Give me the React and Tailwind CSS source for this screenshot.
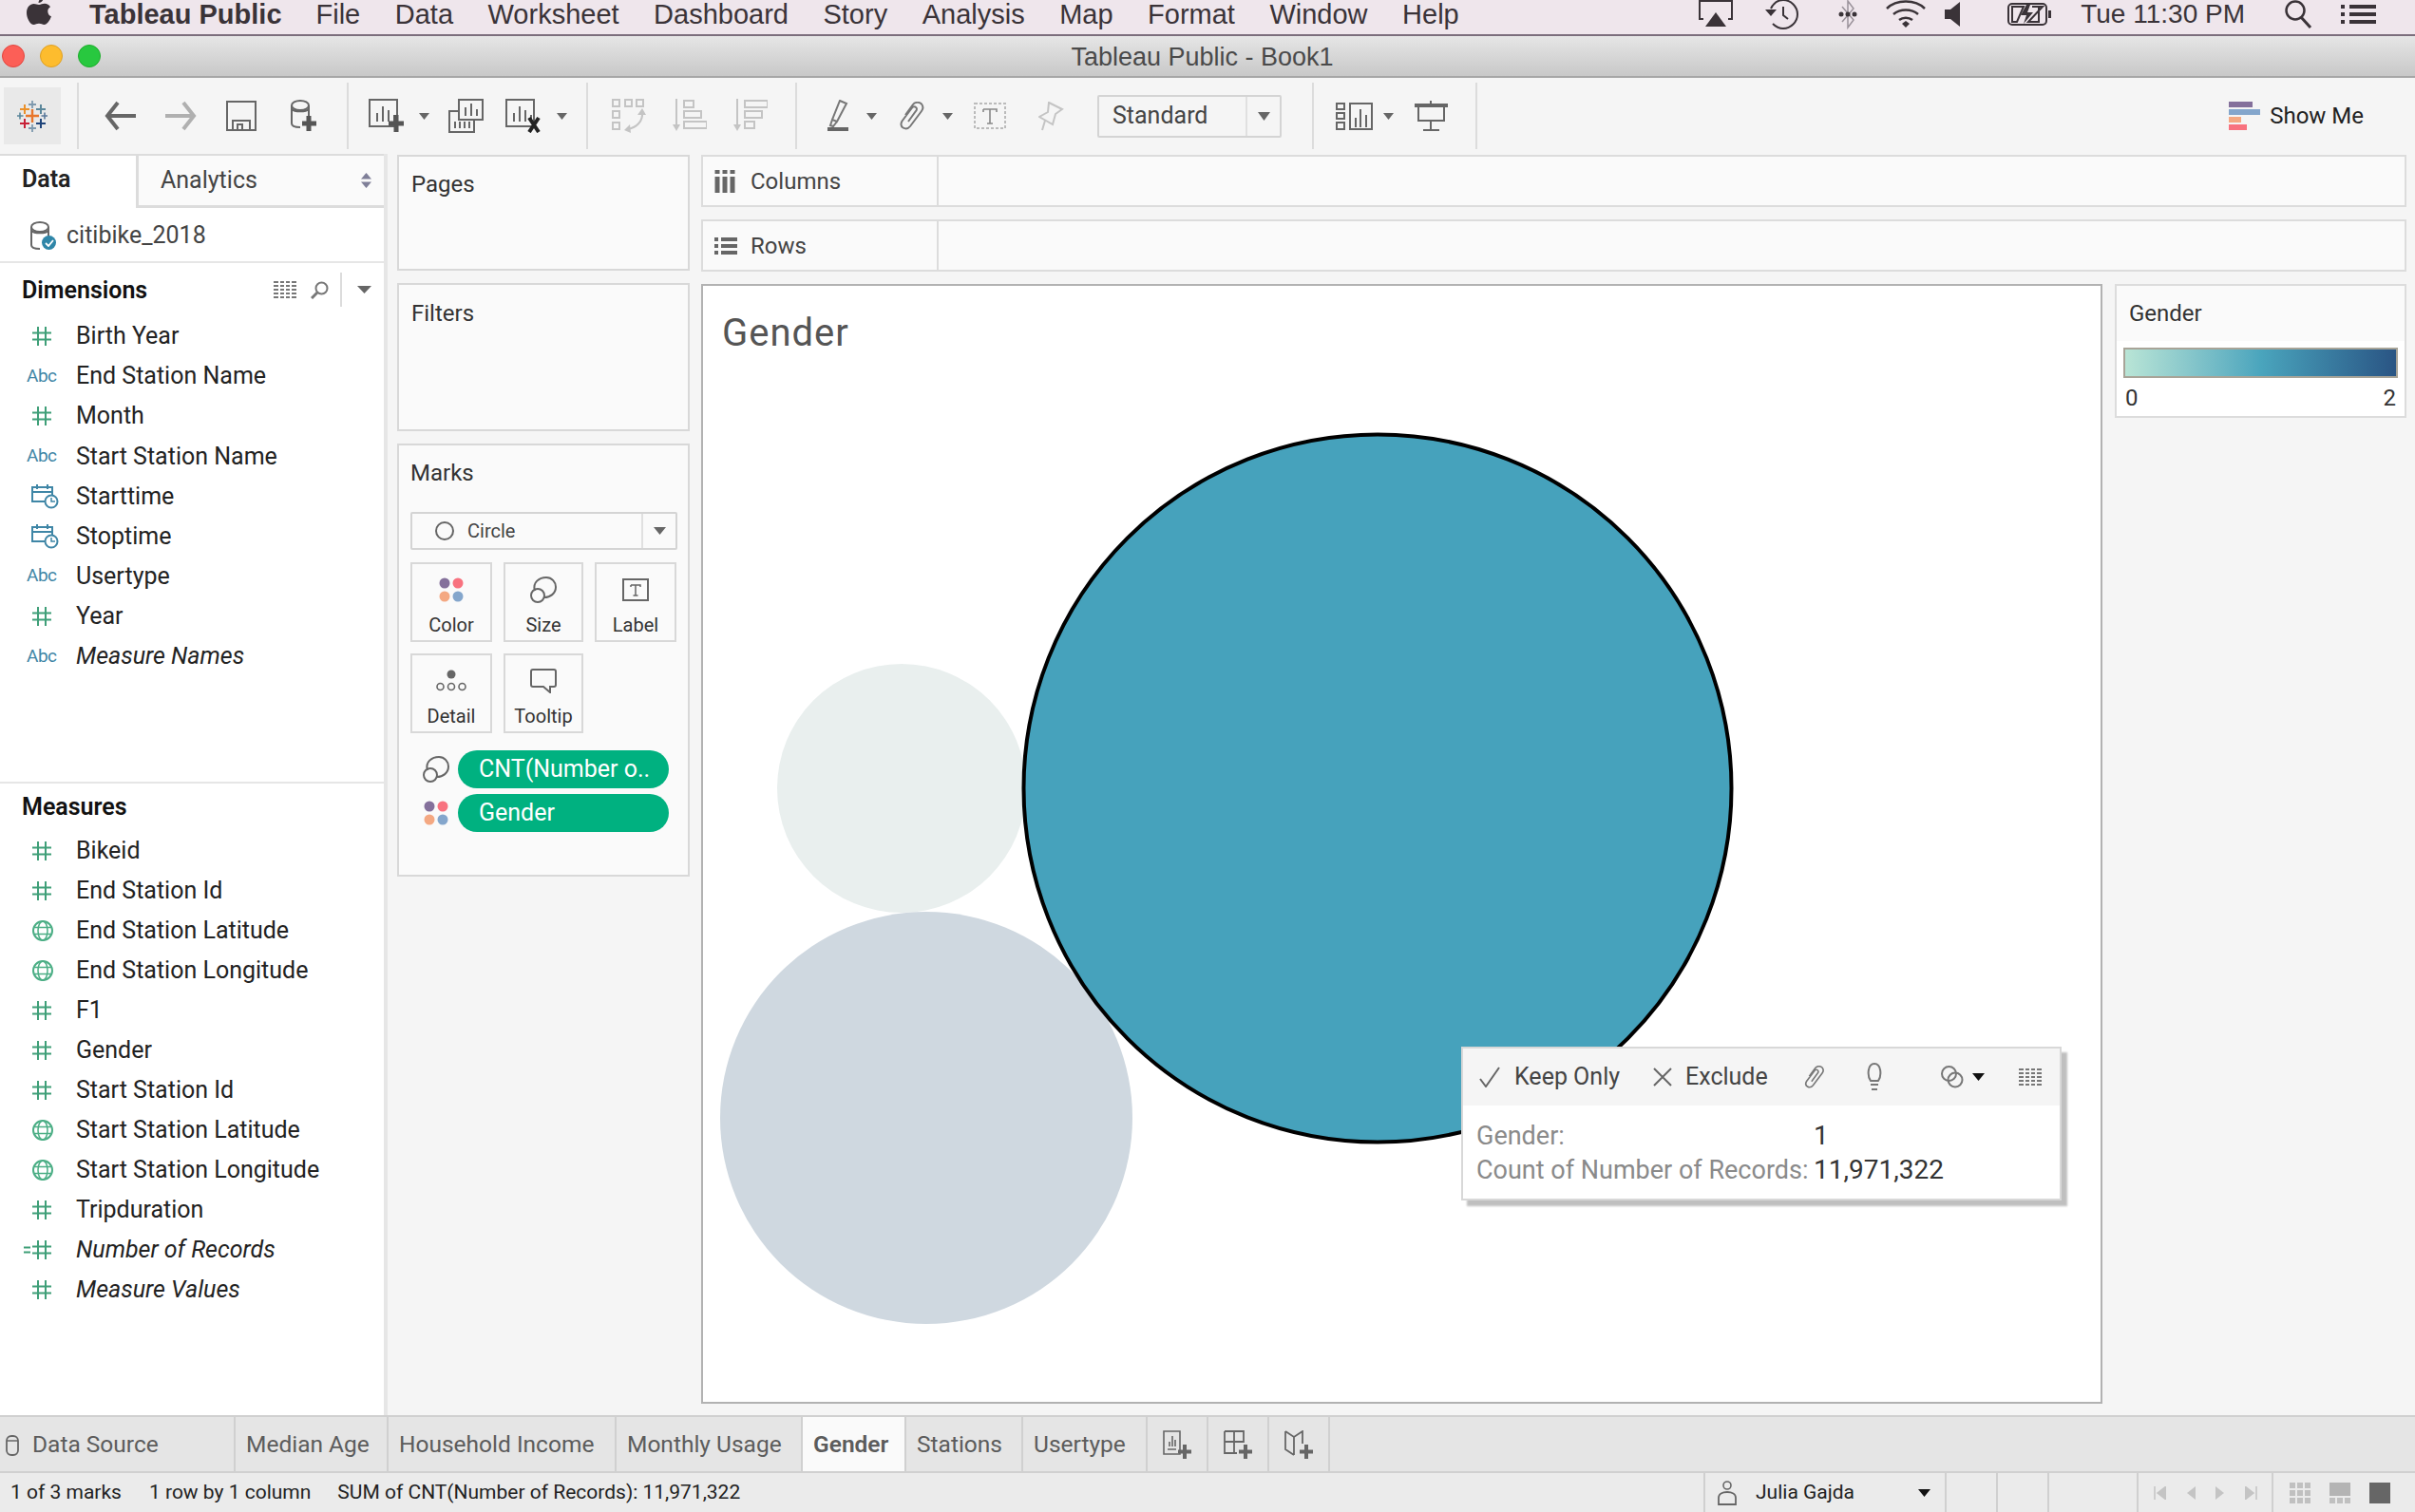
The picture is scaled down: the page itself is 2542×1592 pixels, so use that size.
import React from "react";

const dimensions = [
  { icon: "hash", name: "Birth Year" },
  { icon: "abc", name: "End Station Name" },
  { icon: "hash", name: "Month" },
  { icon: "abc", name: "Start Station Name" },
  { icon: "date", name: "Starttime" },
  { icon: "date", name: "Stoptime" },
  { icon: "abc", name: "Usertype" },
  { icon: "hash", name: "Year" },
  { icon: "abc", name: "Measure Names", italic: true },
];

const measures = [
  { icon: "hash", name: "Bikeid" },
  { icon: "hash", name: "End Station Id" },
  { icon: "globe", name: "End Station Latitude" },
  { icon: "globe", name: "End Station Longitude" },
  { icon: "hash", name: "F1" },
  { icon: "hash", name: "Gender" },
  { icon: "hash", name: "Start Station Id" },
  { icon: "globe", name: "Start Station Latitude" },
  { icon: "globe", name: "Start Station Longitude" },
  { icon: "hash", name: "Tripduration" },
  { icon: "calc", name: "Number of Records", italic: true },
  { icon: "hash", name: "Measure Values", italic: true },
];

function Svg({ w, h, className = "", children }) {
  return (
    <svg width={w} height={h} viewBox={`0 0 ${w} ${h}`} fill="none" className={`shrink-0 ${className}`}>
      {children}
    </svg>
  );
}

function Caret({ w = 11, h = 7, color = "#666", className = "" }) {
  return (
    <Svg w={w} h={h} className={className}>
      <path d={`M0 0H${w}L${w / 2} ${h}Z`} fill={color} />
    </Svg>
  );
}

function Sep({ className = "" }) {
  return <div className={`h-[70px] w-[2px] shrink-0 bg-[#dcdcdc] ${className}`} />;
}

// small table glyph used in the data pane header and the tooltip
function TableIcon({ className = "" }) {
  return (
    <Svg w={24} h={18} className={className}>
      <path d="M0 1H5M7 1H11M13 1H17M19 1H24M0 5H5M7 5H11M13 5H17M19 5H24M0 9H5M7 9H11M13 9H17M19 9H24M0 13H5M7 13H11M13 13H17M19 13H24M0 17H5M7 17H11M13 17H17M19 17H24" stroke="#777" strokeWidth="2" />
    </Svg>
  );
}

function TableauLogo() {
  const crosses = [
    [16, 16, 7, "#e8762b", 2.4],
    [16, 4, 4, "#7e99ae", 1.8],
    [8, 9, 5, "#eb912b", 2],
    [25, 9, 5, "#5b879b", 2],
    [8, 24, 5, "#c72037", 2],
    [25, 24, 5, "#1f447a", 2],
    [16, 29, 4, "#7e99ae", 1.8],
    [3, 16, 3.5, "#5b879b", 1.6],
    [29, 16, 3.5, "#59789a", 1.6],
  ];
  return (
    <Svg w={32} h={33}>
      {crosses.map(([x, y, s, c, t], i) => (
        <path key={i} d={`M${x - s} ${y}H${x + s}M${x} ${y - s}V${y + s}`} stroke={c} strokeWidth={t} />
      ))}
    </Svg>
  );
}

function Chart({ w = 37, h = 36, stroke = "#666" }) {
  return (
    <>
      <path d={`M1 1H${w - 7}V${h - 7}H1Z`} stroke={stroke} strokeWidth="2" />
      <path d="M9 24V15M15 24V8M21 24V12M27 24V17" stroke={stroke} strokeWidth="2" />
    </>
  );
}

function NewSheetIcon() {
  return (
    <Svg w={37} h={36}>
      <Chart />
      <path d="M29 17V35M21 26H37" stroke="#555" strokeWidth="5" />
    </Svg>
  );
}

function DuplicateIcon() {
  return (
    <Svg w={37} h={36}>
      <path d="M11 1H36V22H11Z" fill="#f5f5f5" stroke="#666" strokeWidth="2" />
      <path d="M18 18V9M24 18V5M30 18V11" stroke="#666" strokeWidth="2" />
      <path d="M11 13H1V35H27V22" stroke="#666" strokeWidth="2" />
      <path d="M7 31V24M12 31V24M17 31V24M22 31V24" stroke="#666" strokeWidth="2" />
    </Svg>
  );
}

function ClearIcon() {
  return (
    <Svg w={37} h={36}>
      <Chart />
      <path d="M25 20L35 35M35 20L25 35" stroke="#222" strokeWidth="4" />
    </Svg>
  );
}

function SwapIcon() {
  const s = "#c4c4c4";
  return (
    <Svg w={36} h={36}>
      <g stroke={s} strokeWidth="2">
        <rect x="1" y="1" width="7" height="7" />
        <rect x="14" y="1" width="7" height="7" />
        <rect x="26" y="1" width="7" height="7" />
        <rect x="1" y="13" width="7" height="7" />
        <rect x="1" y="25" width="7" height="7" />
        <path d="M32 14C33 24 26 30 17 32" />
      </g>
      <path d="M27 17L32 10L36 17ZM19 27L13 33L20 36Z" fill={s} />
    </Svg>
  );
}

function SortIcon({ reverse }) {
  const s = "#c4c4c4";
  const bars = reverse
    ? [[12, 2, 24], [12, 13, 18], [12, 24, 10]]
    : [[12, 2, 10], [12, 13, 18], [12, 24, 24]];
  return (
    <Svg w={36} h={36}>
      <path d="M4 0V28" stroke={s} strokeWidth="2" />
      <path d="M0 27H8L4 34Z" fill={s} />
      {bars.map(([x, y, w]) => (
        <rect key={y} x={x} y={y} width={w} height="7" stroke={s} strokeWidth="2" />
      ))}
    </Svg>
  );
}

function ClipIcon({ w = 26, h = 30, color = "#777" }) {
  return (
    <svg width={w} height={h} viewBox="0 0 26 30" fill="none" className="shrink-0">
      <path
        d="M6 14L14 3C16 0.5 20 0 23 2.5C25 5 24.5 8 23 10L11 26C9 28.5 6 29 3.5 27.5C1 26 1 23 2.5 20.5L13 6.5C14 5 16 5 17 6C18.5 7 18 9 17 10L9 21"
        stroke={color}
        strokeWidth="2"
      />
    </svg>
  );
}

function HighlighterIcon() {
  return (
    <Svg w={22} h={34}>
      <path d="M13 1L20 4L10 23L5 21ZM5 21L3 27L6 28L10 23" stroke="#777" strokeWidth="2" />
      <rect x="0" y="29" width="22" height="4" fill="#666" />
    </Svg>
  );
}

function TextBoxIcon() {
  return (
    <Svg w={34} h={28}>
      <rect x="1" y="1" width="32" height="26" stroke="#bbb" strokeWidth="2" strokeDasharray="3 2" />
      <path d="M10 7H24V10M10 7V10M17 7V22M14 22H20" stroke="#888" strokeWidth="1.6" />
    </Svg>
  );
}

function PinIcon() {
  return (
    <Svg w={27} h={31}>
      <path d="M11 1L25 8L18 13L15 24L1 16L10 11ZM7 20L4 30" stroke="#c4c4c4" strokeWidth="2" />
    </Svg>
  );
}

function ShowMeToolIcon() {
  return (
    <Svg w={40} h={29}>
      <g stroke="#666" strokeWidth="2">
        <rect x="1" y="1" width="8" height="6" />
        <rect x="1" y="11" width="8" height="6" />
        <rect x="1" y="21" width="8" height="7" />
        <rect x="15" y="1" width="23" height="27" />
        <path d="M21 26V16M26 26V7M32 26V13" />
      </g>
    </Svg>
  );
}

function PresentIcon() {
  return (
    <Svg w={35} h={32}>
      <rect x="0" y="3" width="35" height="4" fill="#666" />
      <path d="M17 0V3M4 7V21H31V7M17 21V31M9 31H26" stroke="#666" strokeWidth="2" />
    </Svg>
  );
}

function SaveIcon() {
  return (
    <Svg w={32} h={32}>
      <path d="M1 1H31V31H1Z" stroke="#666" strokeWidth="2" />
      <path d="M7 31V21H25V31M12 31V25H17V31" stroke="#666" strokeWidth="2" />
    </Svg>
  );
}

function DbIcon({ w = 28, h = 34, plus }) {
  return (
    <Svg w={w} h={h}>
      <ellipse cx="11" cy="6" rx="9" ry="5" stroke="#666" strokeWidth="2" />
      <path d="M2 6V25C2 28 5 29 11 29M20 6V19M2 10C5 13 17 13 20 10" stroke="#666" strokeWidth="2" />
      {plus && <path d="M20 17V33M13 25H28" stroke="#555" strokeWidth="5" />}
    </Svg>
  );
}

function Toolbar() {
  return (
    <div className="flex h-[80px] shrink-0 items-center bg-[#f5f5f5] pr-[54px]">
      <div className="ml-[4px] flex h-[60px] w-[60px] shrink-0 items-center justify-center bg-[#e9e9e9]">
        <TableauLogo />
      </div>
      <Sep className="ml-[17px]" />
      <Svg w={34} h={32} className="ml-[27px]">
        <path d="M14 2L3 16L14 30M3 16H33" stroke="#666" strokeWidth="4" />
      </Svg>
      <Svg w={34} h={32} className="ml-[29px]">
        <path d="M20 2L31 16L20 30M31 16H1" stroke="#b0b0b0" strokeWidth="4" />
      </Svg>
      <div className="ml-[31px]"><SaveIcon /></div>
      <div className="ml-[35px]"><DbIcon plus /></div>
      <Sep className="ml-[32px]" />
      <div className="ml-[21px]"><NewSheetIcon /></div>
      <Caret className="ml-[16px]" />
      <div className="ml-[20px]"><DuplicateIcon /></div>
      <div className="ml-[23px]"><ClearIcon /></div>
      <Caret className="ml-[17px]" />
      <Sep className="ml-[20px]" />
      <div className="ml-[25px]"><SwapIcon /></div>
      <div className="ml-[28px]"><SortIcon /></div>
      <div className="ml-[28px]"><SortIcon reverse /></div>
      <Sep className="ml-[29px]" />
      <div className="ml-[32px]"><HighlighterIcon /></div>
      <Caret className="ml-[19px]" />
      <div className="ml-[24px]"><ClipIcon /></div>
      <Caret className="ml-[19px]" />
      <div className="ml-[22px]"><TextBoxIcon /></div>
      <div className="ml-[34px]"><PinIcon /></div>
      <div className="ml-[35px] flex h-[45px] w-[194px] shrink-0 items-center rounded-[2px] border-2 border-[#d4d4d4] text-[25px] text-[#444]">
        <span className="flex-1 pl-[14px]">Standard</span>
        <div className="flex h-full w-[36px] items-center justify-center border-l-2 border-[#e0e0e0]">
          <Caret w={13} h={9} />
        </div>
      </div>
      <Sep className="ml-[32px]" />
      <div className="ml-[23px]"><ShowMeToolIcon /></div>
      <Caret className="ml-[10px]" />
      <div className="ml-[22px]"><PresentIcon /></div>
      <Sep className="ml-[29px]" />
      <div className="ml-auto flex items-center gap-[10px]">
        <div className="flex flex-col gap-[2px]">
          <div className="h-[6px] w-[25px] bg-[#84709b]" />
          <div className="h-[6px] w-[33px] bg-[#84a6cc]" />
          <div className="h-[6px] w-[13px] bg-[#f4a882]" />
          <div className="h-[6px] w-[19px] bg-[#f8727f]" />
        </div>
        <span className="text-[24px] text-[#222]">Show Me</span>
      </div>
    </div>
  );
}

function MenuBar() {
  const items = ["File", "Data", "Worksheet", "Dashboard", "Story", "Analysis", "Map", "Format", "Window", "Help"];
  return (
    <div className="flex h-[38px] shrink-0 items-center overflow-hidden border-b-2 border-[#7c6e7c] bg-[#efe6ec] pb-[6px] font-['Liberation_Sans',sans-serif] text-[29px] leading-[28px] text-[#3a3338]">
      <svg width="26" height="42" viewBox="0 0 26 42" className="ml-[28px] shrink-0 translate-y-[3px]">
        <path
          d="M18 1C18 4 15.5 7 12.5 7C12.5 4 15 1.500 18 1ZM13 9C15 9 16.500 7.800 19 7.800C21.500 7.800 23.800 9 25 11.300C21 13.500 21.500 19.500 26 21.300C24.500 25.500 21.500 30 18.500 30C16.500 30 15.500 28.800 13 28.800C10.500 28.800 9.500 30 7.500 30C4 30 0 23.500 0 17.500C0 11.500 3.800 8 7.500 8C9.800 8 11.300 9 13 9Z"
          fill="#3a3338"
          transform="translate(0 -1)"
        />
      </svg>
      <span className="ml-[40px] whitespace-nowrap font-bold">Tableau Public</span>
      <div className="ml-[36px] flex gap-[36.5px]">
        {items.map((item) => (
          <span key={item}>{item}</span>
        ))}
      </div>
      <div className="ml-auto flex items-center pr-[41px]">
        <Svg w={36} h={30}>
          <path d="M5 20H1V1H35V20H31" stroke="#3a3338" strokeWidth="2" />
          <path d="M18 13L29 28H7Z" fill="#3a3338" />
        </Svg>
        <Svg w={37} h={32} className="ml-[33px]">
          <path d="M7 10C10 4 15 1 20 1C28 1 35 8 35 16C35 24 28 31 20 31C15 31 12 29 9 26M20 8V17L25 21" stroke="#3a3338" strokeWidth="2" />
          <path d="M1 11H13L7 18Z" fill="#3a3338" />
        </Svg>
        <Svg w={21} h={32} className="ml-[41px]">
          <path d="M4 8L16 22L10 30V2L16 10L4 24" stroke="#9a929a" strokeWidth="1.500" />
          <circle cx="3" cy="16" r="2.500" fill="#3a3338" />
          <circle cx="10" cy="16" r="2.500" fill="#3a3338" />
          <circle cx="17" cy="16" r="2.500" fill="#3a3338" />
        </Svg>
        <Svg w={42} h={30} className="ml-[29px]">
          <path d="M1 9C11 -1 31 -1 41 9M8 15C15 9 27 9 34 15M14 21C18 18 24 18 28 21" stroke="#3a3338" strokeWidth="2.500" />
          <path d="M17 25L21 22L25 25L21 29Z" fill="#3a3338" />
        </Svg>
        <Svg w={17} h={26} className="ml-[20px]">
          <path d="M0 8H6L16 0V26L6 18H0Z" fill="#3a3338" />
        </Svg>
        <Svg w={46} h={26} className="ml-[49px]">
          <rect x="1" y="2" width="40" height="22" rx="4" stroke="#3a3338" strokeWidth="2" />
          <path d="M5 5H17L10 21H5ZM37 5H26L33 5V21H22Z" stroke="#3a3338" strokeWidth="2" />
          <path d="M20 3L14 14H20L17 23L27 11H21L24 3Z" fill="#3a3338" />
          <rect x="43" y="9" width="3" height="8" fill="#3a3338" />
        </Svg>
        <span className="ml-[31px] whitespace-nowrap text-[28px]">Tue 11:30 PM</span>
        <Svg w={29} h={30} className="ml-[42px]">
          <circle cx="11" cy="11" r="9.500" stroke="#3a3338" strokeWidth="2.500" />
          <path d="M17 18L27 29" stroke="#3a3338" strokeWidth="3" />
        </Svg>
        <Svg w={37} h={22} className="ml-[30px]">
          <path d="M0 3H4M9 3H37M0 11H4M9 11H37M0 19H4M9 19H37" stroke="#3a3338" strokeWidth="4" />
        </Svg>
      </div>
    </div>
  );
}

function TitleBar() {
  return (
    <div className="relative flex h-[44px] shrink-0 items-center justify-center border-b-2 border-[#a6a6a6] bg-gradient-to-b from-[#e6e6e6] to-[#c8c8c8] pt-[2px]">
      <div className="absolute left-[2px] top-[9px] flex gap-[16px]">
        <div className="h-[24px] w-[24px] rounded-full border border-[#e2463f] bg-[#fc5f57]" />
        <div className="h-[24px] w-[24px] rounded-full border border-[#dfa023] bg-[#fdbc2e]" />
        <div className="h-[24px] w-[24px] rounded-full border border-[#1dad2b] bg-[#28c83f]" />
      </div>
      <span className="-ml-[11px] font-['Liberation_Sans',sans-serif] text-[27px] text-[#4a4a4a]">Tableau Public - Book1</span>
    </div>
  );
}

function Hash() {
  return (
    <Svg w={20} h={20}>
      <path d="M6 0V20M14 0V20M0 6.500H20M0 13.500H20" stroke="#3f9f78" strokeWidth="2" />
    </Svg>
  );
}

function FieldIcon({ type }) {
  if (type === "abc") {
    return <span className="text-[19px] tracking-[-0.5px] text-[#3f86a6]">Abc</span>;
  }
  if (type === "hash") return <Hash />;
  if (type === "calc") {
    return (
      <div className="-ml-[9px] flex items-center gap-[2px]">
        <Svg w={7} h={8}>
          <path d="M0 1.500H7M0 6.500H7" stroke="#3f9f78" strokeWidth="2" />
        </Svg>
        <Hash />
      </div>
    );
  }
  if (type === "globe") {
    return (
      <Svg w={22} h={22}>
        <circle cx="11" cy="11" r="10" stroke="#4bae85" strokeWidth="2" />
        <ellipse cx="11" cy="11" rx="5" ry="10" stroke="#4bae85" strokeWidth="1.500" />
        <path d="M2 7.500H20M2 14.500H20" stroke="#4bae85" strokeWidth="1.500" />
      </Svg>
    );
  }
  return (
    <Svg w={29} h={27} className="ml-[3px]">
      <path d="M16 19H1V4H22V12M1 9H22M6 1V6M17 1V6" stroke="#3f86a6" strokeWidth="2" />
      <circle cx="21" cy="19" r="6.500" fill="white" stroke="#3f86a6" strokeWidth="2" />
      <path d="M21 15V19H25" stroke="#3f86a6" strokeWidth="1.500" />
    </Svg>
  );
}

function FieldRow({ icon, name, italic, rowClass = "h-[42.1px]" }) {
  return (
    <div className={`flex items-center ${rowClass}`}>
      <div className="flex w-[80px] shrink-0 items-center justify-start pl-[28px]">
        {icon === "abc" ? (
          <FieldIcon type={icon} />
        ) : icon === "date" ? (
          <div className="pl-[2px]"><FieldIcon type={icon} /></div>
        ) : (
          <div className="pl-[6px]"><FieldIcon type={icon} /></div>
        )}
      </div>
      <span className={`whitespace-nowrap text-[25px] text-[#222] ${italic ? "italic" : ""}`}>{name}</span>
    </div>
  );
}

function DataPane() {
  return (
    <div className="flex w-[408px] shrink-0 flex-col border-r-[4px] border-[#e6e6e6] bg-white">
      <div className="flex h-[57px] shrink-0 border-t-2 border-[#dcdcdc]">
        <div className="flex w-[143px] items-center pb-[5px] pl-[23px] text-[25px] font-semibold text-[#222]">Data</div>
        <div className="flex flex-1 items-center justify-between border-b-[3px] border-l-[3px] border-[#dcdcdc] bg-[#fafafa] pl-[23px] pr-[13px] text-[25px] text-[#444]">
          <span>Analytics</span>
          <Svg w={11} h={16}>
            <path d="M0 6.500L5.500 0L11 6.500ZM0 9.500L5.500 16L11 9.500Z" fill="#557" fillOpacity="0.75" />
          </Svg>
        </div>
      </div>
      <div className="flex h-[58px] shrink-0 items-center border-b-2 border-[#e6e6e6] pl-[31px] pt-[2px]">
        <div className="relative h-[30px] w-[28px]">
          <DbIcon w={24} h={30} />
          <div className="absolute bottom-0 right-0 flex h-[15px] w-[15px] items-center justify-center rounded-full bg-[#2f86a8]">
            <Svg w={10} h={8}>
              <path d="M1 4L4 7L9 1" stroke="white" strokeWidth="1.800" />
            </Svg>
          </div>
        </div>
        <span className="ml-[11px] text-[25px] text-[#444]">citibike_2018</span>
      </div>
      <div className="flex h-[56px] shrink-0 items-center pl-[23px] pr-[13px]">
        <span className="flex-1 pt-[2px] text-[25px] font-semibold text-[#111]">Dimensions</span>
        <TableIcon className="translate-x-[2px]" />
        <Svg w={19} h={19} className="ml-[17px]">
          <circle cx="11.500" cy="7.500" r="6" stroke="#777" strokeWidth="2" />
          <path d="M7 12L1 18" stroke="#777" strokeWidth="3" />
        </Svg>
        <div className="ml-[12px] h-[36px] w-[2px] bg-[#dcdcdc]" />
        <Caret w={15} h={8} className="ml-[16px]" />
      </div>
      {dimensions.map((f) => (
        <FieldRow key={f.name} {...f} />
      ))}
      <div className="mt-[111px] flex h-[52px] shrink-0 items-center border-t-2 border-[#e6e6e6] pb-[1px] pl-[23px] text-[25px] font-semibold text-[#111]">
        Measures
      </div>
      {measures.map((f) => (
        <FieldRow key={f.name} {...f} rowClass="h-[42px]" />
      ))}
    </div>
  );
}

function ColorDots() {
  return (
    <Svg w={26} h={26}>
      <circle cx="6" cy="6" r="5.500" fill="#84709b" />
      <circle cx="20" cy="6" r="5.500" fill="#f8727f" />
      <circle cx="6" cy="20" r="5.500" fill="#f4a882" />
      <circle cx="20" cy="20" r="5.500" fill="#84a6cc" />
    </Svg>
  );
}

function SizeIcon() {
  return (
    <Svg w={28} h={28}>
      <path d="M5 15C2 6 10 1 17 1C23 1 27 6 27 11C27 18 21 22 15 22" stroke="#666" strokeWidth="2" />
      <circle cx="8" cy="20" r="7" stroke="#666" strokeWidth="2" />
    </Svg>
  );
}

function MarkCard({ label, icon, className = "" }) {
  return (
    <div className={`flex h-[84px] flex-col items-center border-2 border-[#d8d8d8] pt-[12px] ${className}`}>
      <div className="flex h-[30px] items-center">{icon}</div>
      <span className="mt-[12px] text-[20px] leading-[20px] text-[#333]">{label}</span>
    </div>
  );
}

function MarksCard() {
  return (
    <div className="flex h-[456px] w-full flex-col border-2 border-[#d8d8d8] bg-[#fafafa] pl-[12px] pr-[11px]">
      <div className="flex h-[56px] items-center pt-[2px] text-[24px] text-[#333]">Marks</div>
      <div className="mt-[14px] flex h-[40px] items-center rounded-[2px] border-2 border-[#d4d4d4] text-[20px] text-[#444]">
        <div className="flex flex-1 items-center pl-[24px]">
          <div className="h-[20px] w-[20px] rounded-full border-2 border-[#666]" />
          <span className="ml-[14px]">Circle</span>
        </div>
        <div className="flex h-full w-[36px] items-center justify-center border-l-2 border-[#e0e0e0]">
          <Caret w={13} h={8} />
        </div>
      </div>
      <div className="mt-[13px] grid grid-cols-[86px_84px_86px] gap-x-[12px] gap-y-[12px]">
        <MarkCard label="Color" icon={<ColorDots />} />
        <MarkCard label="Size" icon={<SizeIcon />} />
        <MarkCard
          label="Label"
          icon={
            <Svg w={28} h={24}>
              <rect x="1" y="1" width="26" height="22" stroke="#666" strokeWidth="2" />
              <path d="M9 7H19V9M9 7V9M14 7V18M11.500 18H16.500" stroke="#666" strokeWidth="1.500" />
            </Svg>
          }
        />
        <MarkCard
          label="Detail"
          icon={
            <Svg w={32} h={24}>
              <circle cx="16" cy="5" r="4.500" fill="#666" />
              <circle cx="4.500" cy="18" r="3.500" stroke="#666" strokeWidth="1.600" />
              <circle cx="16" cy="18" r="3.500" stroke="#666" strokeWidth="1.600" />
              <circle cx="27.500" cy="18" r="3.500" stroke="#666" strokeWidth="1.600" />
            </Svg>
          }
        />
        <MarkCard
          label="Tooltip"
          icon={
            <Svg w={28} h={26}>
              <path d="M3 1H25C26 1 27 2 27 3V17C27 18 26 19 25 19H21V25L14 19H3C2 19 1 18 1 17V3C1 2 2 1 3 1Z" stroke="#666" strokeWidth="2" />
            </Svg>
          }
        />
      </div>
      <div className="mt-[18px] flex h-[40px] items-center">
        <div className="ml-[13px] w-[37px]"><SizeIcon /></div>
        <div className="flex h-[40px] w-[222px] items-center rounded-full bg-[#00b180] pl-[22px] text-[25px] text-white">CNT(Number o..</div>
      </div>
      <div className="mt-[6px] flex h-[40px] items-center">
        <div className="ml-[14px] w-[36px]"><ColorDots /></div>
        <div className="flex h-[40px] w-[222px] items-center rounded-full bg-[#00b180] pl-[22px] text-[25px] text-white">Gender</div>
      </div>
    </div>
  );
}

function Shelf({ label, icon }) {
  return (
    <div className="flex h-[55px] border-2 border-[#dcdcdc] bg-[#fafafa]">
      <div className="flex w-[248px] items-center border-r-2 border-[#dcdcdc] pl-[12px] text-[24px] text-[#444]">
        <div className="w-[36px]">{icon}</div>
        <span className="ml-[2px]">{label}</span>
      </div>
    </div>
  );
}

function Viz() {
  return (
    <div className="relative h-[1179px] flex-1 border-2 border-[#b2b2b2] bg-white">
      <div className="pl-[20px] pt-[28px] text-[40px] leading-[44px] tracking-[1px] text-[#555]">Gender</div>
      <svg className="absolute inset-0" width="1470" height="1175" viewBox="0 0 1470 1175">
        <circle cx="209" cy="529" r="131" fill="#e9efee" />
        <circle cx="235" cy="876" r="217" fill="#cfd8e0" />
        <circle cx="710" cy="529" r="372.500" fill="#46a2bc" stroke="#000" strokeWidth="4" />
      </svg>
      <div className="absolute left-[798px] top-[801px] h-[162px] w-[632px] border-2 border-[#d8d8d8] bg-white shadow-[6px_6px_2px_rgba(0,0,0,0.25)]">
        <div className="flex h-[60px] items-center bg-[#f5f5f5] pl-[17px] text-[25px] text-[#444]">
          <Svg w={22} h={22}>
            <path d="M1 13L7 21L21 1" stroke="#666" strokeWidth="2" />
          </Svg>
          <span className="ml-[15px]">Keep Only</span>
          <Svg w={20} h={20} className="ml-[35px]">
            <path d="M1 1L19 19M19 1L1 19" stroke="#666" strokeWidth="2" />
          </Svg>
          <span className="ml-[14px]">Exclude</span>
          <div className="ml-[38px]"><ClipIcon w={22} h={24} /></div>
          <Svg w={16} h={30} className="ml-[44px]">
            <path d="M4 19C0 13 1 1 8 1C15 1 16 13 12 19Z" stroke="#777" strokeWidth="2" />
            <path d="M4 23H12M5 28H11" stroke="#777" strokeWidth="2" />
          </Svg>
          <Svg w={24} h={24} className="ml-[62px]">
            <circle cx="8.500" cy="8.500" r="7.500" stroke="#777" strokeWidth="2" />
            <circle cx="15" cy="15" r="7.500" stroke="#777" strokeWidth="2" />
          </Svg>
          <Caret w={13} h={8} color="#111" className="ml-[9px]" />
          <TableIcon className="ml-[36px]" />
        </div>
        <div className="grid grid-cols-[355px_auto] pl-[14px] pt-[14px] leading-[36px]">
          <span className="text-[27px] text-[#8a8a8a]">Gender:</span>
          <span className="text-[28px] text-[#333]">1</span>
          <span className="whitespace-nowrap text-[27px] text-[#8a8a8a]">Count of Number of Records:</span>
          <span className="text-[28px] text-[#333]">11,971,322</span>
        </div>
      </div>
    </div>
  );
}

function Legend() {
  return (
    <div className="h-[141px] w-[307px] shrink-0 border-2 border-[#dcdcdc] bg-white">
      <div className="flex h-[58px] items-center bg-[#fafafa] pl-[13px] text-[24px] text-[#333]">Gender</div>
      <div className="px-[7px] pt-[7px]">
        <div className="h-[32px] border-2 border-[#a8a498] bg-gradient-to-r from-[#b9e5d6] via-[#4aa5bd] to-[#2a5584]" />
        <div className="mt-[6px] flex justify-between px-[2px] text-[24px] leading-[30px] text-[#333]">
          <span>0</span>
          <span>2</span>
        </div>
      </div>
    </div>
  );
}

function Workspace() {
  return (
    <div className="flex min-h-0 flex-1 gap-[12px] bg-[#f5f5f5] pb-[13px] pl-[10px] pr-[9px] pt-[1px]">
      <div className="flex w-[308px] shrink-0 flex-col gap-[13px]">
        <div className="h-[122px] border-2 border-[#d8d8d8] bg-[#fafafa] pl-[13px] pt-[11px] text-[24px] text-[#333]">Pages</div>
        <div className="h-[156px] border-2 border-[#d8d8d8] bg-[#fafafa] pl-[13px] pt-[12px] text-[24px] text-[#333]">Filters</div>
        <MarksCard />
      </div>
      <div className="flex min-w-0 flex-1 flex-col gap-[13px]">
        <div className="flex flex-col gap-[13px]">
          <Shelf
            label="Columns"
            icon={
              <Svg w={22} h={24}>
                <path d="M3 7V24M11 7V24M19 7V24" stroke="#666" strokeWidth="5" />
                <path d="M3 0V4M11 0V4M19 0V4" stroke="#666" strokeWidth="5" />
              </Svg>
            }
          />
          <Shelf
            label="Rows"
            icon={
              <Svg w={24} h={20}>
                <path d="M0 3H4M7 3H24M0 10H4M7 10H24M0 17H4M7 17H24" stroke="#666" strokeWidth="4" />
              </Svg>
            }
          />
        </div>
        <div className="flex flex-1 items-start gap-[13px]">
          <Viz />
          <Legend />
        </div>
      </div>
    </div>
  );
}

function TabAdd({ children }) {
  return (
    <div className="flex w-[64px] shrink-0 items-center justify-center border-r-2 border-[#d0d0d0]">
      <Svg w={30} h={30}>
        {children}
        <path d="M23 15V30M16 22.500H30" stroke="#666" strokeWidth="4" />
      </Svg>
    </div>
  );
}

function SheetTabs() {
  const tabs = [
    { name: "Median Age", w: "w-[161px]" },
    { name: "Household Income", w: "w-[240px]" },
    { name: "Monthly Usage", w: "w-[196px]" },
    { name: "Gender", w: "w-[109px]", active: true },
    { name: "Stations", w: "w-[123px]" },
    { name: "Usertype", w: "w-[131px]" },
  ];
  return (
    <div className="flex h-[61px] shrink-0 border-y-2 border-[#d0d0d0] bg-[#e5e5e5] text-[24.5px] text-[#5c5c5c]">
      <div className="flex w-[248px] shrink-0 items-center border-r-2 border-[#d0d0d0] pl-[6px] pt-[2px]">
        <Svg w={14} h={22}>
          <rect x="1" y="1" width="12" height="20" rx="5" stroke="#666" strokeWidth="1.800" />
          <path d="M1 6H13" stroke="#666" strokeWidth="1.500" />
        </Svg>
        <span className="ml-[14px]">Data Source</span>
      </div>
      {tabs.map((t) => (
        <div
          key={t.name}
          className={`flex ${t.w} shrink-0 items-center border-r-2 border-[#d0d0d0] pl-[11px] pt-[2px] ${t.active ? "bg-[#fafafa] font-semibold" : ""}`}
        >
          {t.name}
        </div>
      ))}
      <TabAdd>
        <path d="M1 1H18V25H1Z M5 20H14M7 17V12M10 17V6M13 17V10" stroke="#666" strokeWidth="1.600" />
      </TabAdd>
      <TabAdd>
        <path d="M1 1H21V13M14 24H1V1M1 12H21M11 1V24" stroke="#666" strokeWidth="1.800" />
      </TabAdd>
      <TabAdd>
        <path d="M1 1L10 7L19 1V14M1 1V20L10 26M10 7V26" stroke="#666" strokeWidth="1.800" />
      </TabAdd>
    </div>
  );
}

function StatusCell({ className = "", children }) {
  return <div className={`flex h-full shrink-0 items-center border-r-2 border-[#d0d0d0] ${className}`}>{children}</div>;
}

function StatusBar() {
  return (
    <div className="flex h-[41px] shrink-0 items-center bg-[#ebebeb] text-[21px] text-[#222]">
      <div className="flex w-[1795px] shrink-0 border-r-2 border-[#d0d0d0] pl-[11px] leading-[41px]">
        <span>1 of 3 marks</span>
        <span className="ml-[29px]">1 row by 1 column</span>
        <span className="ml-[28px]">SUM of CNT(Number of Records): 11,971,322</span>
      </div>
      <StatusCell className="w-[254px] pl-[13px]">
        <Svg w={20} h={26}>
          <circle cx="10" cy="5" r="4" stroke="#666" strokeWidth="1.600" />
          <path d="M1 25V18C1 14 5 12 10 12C15 12 19 14 19 18V25Z" stroke="#666" strokeWidth="1.800" />
        </Svg>
        <span className="ml-[20px] flex-1">Julia Gajda</span>
        <Caret w={13} h={8} color="#111" className="mr-[15px]" />
      </StatusCell>
      <StatusCell className="w-[54px]" />
      <StatusCell className="w-[54px]" />
      <StatusCell className="w-[94px]" />
      <StatusCell className="w-[142px] gap-[21px] pl-[16px]">
        <Svg w={13} h={14}>
          <path d="M1 0V14M13 0V14L4 7Z" stroke="#c4c4c4" fill="#c4c4c4" strokeWidth="1.500" />
        </Svg>
        <Svg w={10} h={14}>
          <path d="M10 0V14L1 7Z" fill="#c4c4c4" />
        </Svg>
        <Svg w={10} h={14}>
          <path d="M0 0V14L9 7Z" fill="#c4c4c4" />
        </Svg>
        <Svg w={13} h={14}>
          <path d="M12 0V14M0 0V14L9 7Z" stroke="#c4c4c4" fill="#c4c4c4" strokeWidth="1.500" />
        </Svg>
      </StatusCell>
      <div className="flex items-center gap-[20px] pl-[17px]">
        <Svg w={22} h={22}>
          {[0, 8, 16].map((x) =>
            [0, 8, 16].map((y) => <rect key={`${x}-${y}`} x={x} y={y} width="6" height="6" fill="#c0c0c0" />)
          )}
        </Svg>
        <Svg w={22} h={22}>
          <rect x="0" y="0" width="22" height="14" fill="#b4b4b4" />
          {[0, 8, 16].map((x) => (
            <rect key={x} x={x} y="16" width="6" height="6" fill="#c0c0c0" />
          ))}
        </Svg>
        <div className="h-[22px] w-[22px] bg-[#666]" />
      </div>
    </div>
  );
}

export default function App() {
  return (
    <div className="flex h-screen w-full flex-col overflow-hidden bg-[#f5f5f5] font-['Roboto',sans-serif]">
      <MenuBar />
      <TitleBar />
      <Toolbar />
      <div className="flex min-h-0 flex-1">
        <DataPane />
        <Workspace />
      </div>
      <SheetTabs />
      <StatusBar />
    </div>
  );
}
